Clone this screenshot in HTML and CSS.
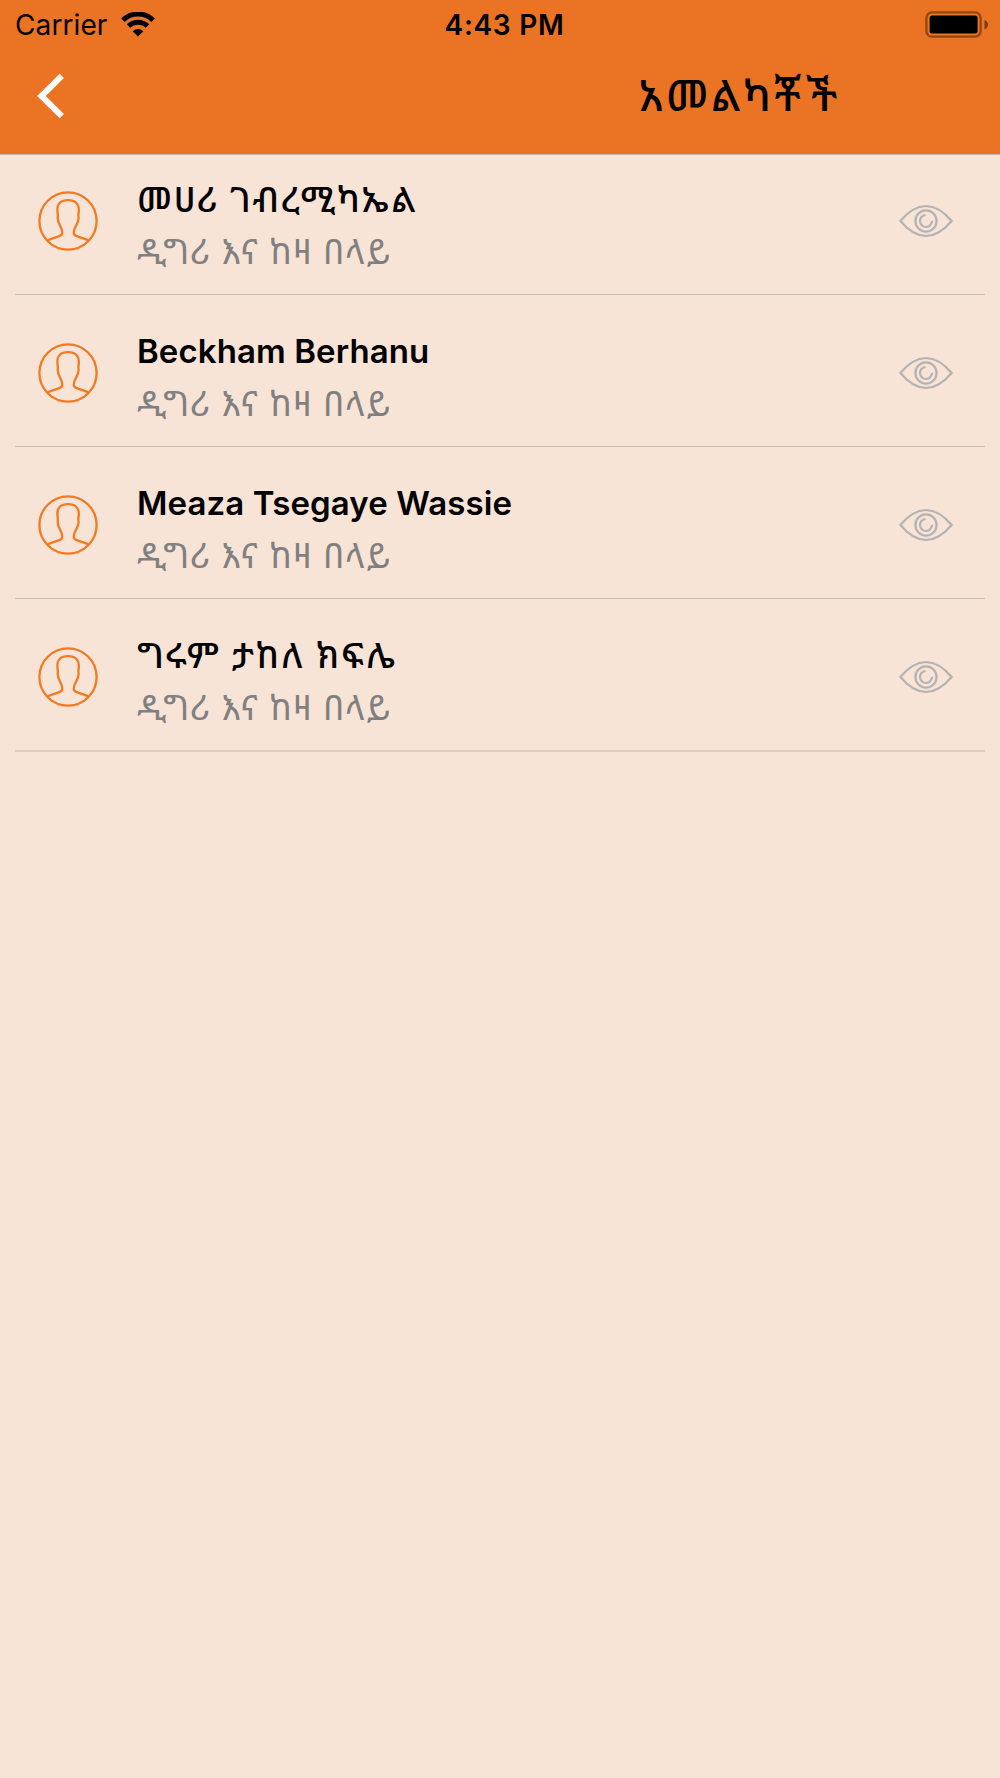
FILE: index.html
```
<!DOCTYPE html>
<html lang="am">
  <head>
    <meta charset="UTF-8">
    <meta name="viewport" content="width=device-width, initial-scale=1.0">
    <title>አመልካቾች</title>
    <link rel="stylesheet" href="styles.css">
  </head>
  <body>
    <!-- shared icons -->
    <svg class="sprite">
      <symbol id="person" viewBox="0 0 60 60">
        <circle cx="30" cy="30" r="28.6"/>
        <path d="M9.8 49.2L22 44.8Q24.3 44 24.2 41.5C24.2 36 19.8 33 19.8 27.5Q20 24 19.4 20C18.8 13 22.5 9.2 30 9.2S41.2 13 40.8 20Q40 24 40.6 27.5C40.4 33 35.8 36 35.8 41.5Q35.7 44 38 44.8L50.2 49.2"/>
      </symbol>
      <symbol id="eye" viewBox="0 0 54 34">
        <path d="M1.4 17Q14 2 27 2T52.6 17Q40 32 27 32T1.4 17Z"/>
        <circle cx="27" cy="17" r="10.6"/>
        <path d="M26.5 11A6 6 0 1 0 33 16.8"/>
      </symbol>
    </svg>

    <header class="header">
      <div class="status">
        <div class="carrier">
          <span>Carrier</span>
          <svg class="wifi" viewBox="0 0 34 25">
            <path d="M1.9 8.2A21.7 21.7 0 0 1 32.1 8.2M7.5 14A13.7 13.7 0 0 1 26.5 14"/>
            <path class="dot" d="M17 24.6L11.7 19.3Q17 14.8 22.3 19.3Z"/>
          </svg>
        </div>
        <span class="time">4:43 PM</span>
        <svg class="battery" viewBox="0 0 64 28">
          <rect class="case" x="1.4" y="1.4" width="54.2" height="24.2" rx="5.5"/>
          <rect x="4.6" y="4.6" width="48" height="18" rx="2.5"/>
          <path class="tip" d="M59.5 9Q63 10.5 63 13.5T59.5 18.5Z"/>
        </svg>
      </div>
      <div class="nav">
        <a class="back" href="#" aria-label="Back">
          <svg viewBox="0 0 28 46"><path d="M24.8 2.8L4.4 23L24.8 43.2"/></svg>
        </a>
        <h1 class="title">አመልካቾች</h1>
      </div>
    </header>

    <ul class="list">
      <li class="row">
        <svg class="avatar"><use href="#person"/></svg>
        <div class="info">
          <div class="name">መሀሪ ገብረሚካኤል</div>
          <div class="level">ዲግሪ እና ከዛ በላይ</div>
        </div>
        <svg class="eye"><use href="#eye"/></svg>
      </li>
      <li class="row">
        <svg class="avatar"><use href="#person"/></svg>
        <div class="info">
          <div class="name latin">Beckham Berhanu</div>
          <div class="level">ዲግሪ እና ከዛ በላይ</div>
        </div>
        <svg class="eye"><use href="#eye"/></svg>
      </li>
      <li class="row">
        <svg class="avatar"><use href="#person"/></svg>
        <div class="info">
          <div class="name latin">Meaza Tsegaye Wassie</div>
          <div class="level">ዲግሪ እና ከዛ በላይ</div>
        </div>
        <svg class="eye"><use href="#eye"/></svg>
      </li>
      <li class="row">
        <svg class="avatar"><use href="#person"/></svg>
        <div class="info">
          <div class="name">ግሩም ታከለ ክፍሌ</div>
          <div class="level">ዲግሪ እና ከዛ በላይ</div>
        </div>
        <svg class="eye"><use href="#eye"/></svg>
      </li>
    </ul>
  </body>
</html>
```
FILE: styles.css
```
* {
    box-sizing: border-box;
}
body {
    margin: 0;
    min-height: 100vh;
    background-color: #f7e4d7;
    color: #000;
    font-family: Inter, "Noto Sans Ethiopic", "Noto Sans", sans-serif;
}
svg {
    display: block;
    fill: none;
    flex: none;
}
.sprite {
    display: none;
}
.header {
    height: 155px;
    background-color: #eb7424;
    border-bottom: 1px solid #bdb5b5;
}
.status {
    display: grid;
    grid-template-columns: 1fr auto 1fr;
    align-items: center;
    height: 50px;
    padding: 0 11px 0 15px;
}
.carrier {
    display: flex;
    align-items: center;
    gap: 14px;
    font-size: 28px;
    letter-spacing: 0.1px;
}
.wifi {
    width: 34px;
    height: 25px;
    margin-bottom: 2px;
    stroke: #000;
    stroke-width: 5;
}
.wifi .dot {
    fill: #000;
    stroke: none;
}
.time {
    padding-left: 5px;
    font-size: 28px;
    font-weight: 600;
    letter-spacing: 0.7px;
}
.battery {
    width: 64px;
    height: 28px;
    justify-self: end;
    fill: #000;
}
.battery .case {
    fill: none;
    stroke: #96480f;
    stroke-width: 2.4;
}
.battery .tip {
    fill: #7c3c0d;
}
.nav {
    display: flex;
    justify-content: space-between;
    align-items: center;
    height: 92px;
    padding: 0 159px 0 37px;
}
.back svg {
    width: 28px;
    height: 46px;
    stroke: #fff;
    stroke-width: 6;
}
.title {
    margin: 0 0 3px;
    font-size: 43px;
    font-weight: 500;
    letter-spacing: 3.8px;
    white-space: nowrap;
}
.list {
    list-style: none;
    margin: 0;
    padding: 0 15px;
}
.row {
    display: flex;
    align-items: flex-end;
    height: 152px;
    padding: 0 32px 0 23px;
    border-bottom: 1px solid #bfbcbc;
}
.row:first-child {
    height: 140px;
}
.row:last-child {
    height: 153px;
    border-bottom: 2px solid #dccdc6;
}
.avatar {
    width: 60px;
    height: 60px;
    margin-bottom: 43px;
    stroke: #f47920;
    stroke-width: 2.3;
}
.info {
    flex: 1;
    margin-left: 39px;
    padding-bottom: 16px;
    white-space: nowrap;
}
.name {
    height: 52px;
    line-height: 52px;
    font-size: 35.5px;
    font-weight: 500;
    letter-spacing: 1.7px;
}
.name.latin {
    height: 53px;
    font-size: 33px;
    font-weight: 600;
    letter-spacing: 0.1px;
}
.level {
    height: 52px;
    line-height: 52px;
    font-size: 34.5px;
    letter-spacing: 0.9px;
    color: #808080;
}
.eye {
    width: 54px;
    height: 34px;
    margin-bottom: 56px;
    stroke: #b3b3b3;
    stroke-width: 2.2;
}
```
